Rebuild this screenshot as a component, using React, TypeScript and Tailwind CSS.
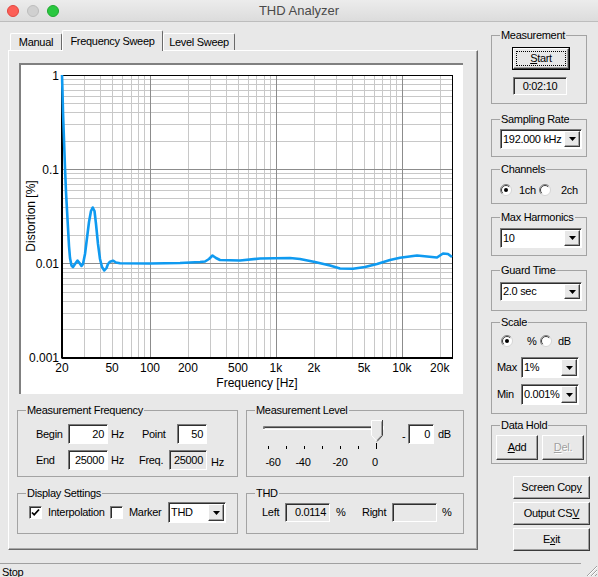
import type { ReactNode } from "react"
import clsx from "clsx"

// classic win32 bevels
const raised =
  "border border-t-white border-l-white border-r-[#3a3a3a] border-b-[#3a3a3a] shadow-[inset_-1px_-1px_0_#a0a0a0]"
const sunken =
  "border border-t-[#7c7c7c] border-l-[#7c7c7c] border-r-white border-b-white shadow-[inset_1px_1px_0_#2e2e2e]"

// chart plot area (svg coords, svg origin = window 21,65)
const X0 = 41
const X1 = 431
const Y0 = 10
const Y1 = 292.5

const fx = (f: number) => X0 + (Math.log10(f / 20) / Math.log10(1250)) * (X1 - X0)
const vy = (v: number) => Y0 + -Math.log10(v) * ((Y1 - Y0) / 3)

// THD curve, traced in window pixels
const CURVE = [
  [62, 75], [62.5, 92], [63, 112], [64, 140], [65, 168], [66, 192], [67, 210],
  [68, 228], [69, 246], [70, 258], [71.5, 265.5], [73, 267], [75, 264],
  [77.5, 260.5], [79.5, 263], [81.5, 266], [83, 264], [85, 254], [87, 238],
  [89, 222], [91, 211], [92.7, 207.5], [94.5, 211], [96, 224], [98, 244],
  [100, 259], [102, 267], [104.3, 270.5], [106.5, 268], [108, 264],
  [110, 261.7], [113, 260.7], [116, 262.5], [120, 263.3], [150, 263.5],
  [180, 263], [200, 262], [205, 261.5], [209, 259], [212.5, 255.5], [216, 258],
  [220, 260], [240, 260.5], [260, 258.5], [290, 258], [300, 259], [315, 262],
  [330, 265.5], [340, 268.5], [353, 268.7], [365, 267], [377, 264],
  [390, 260], [400, 257.7], [417, 255.5], [437, 257.5], [443, 253.5],
  [448, 254], [452, 257],
]

export default function App() {
  return (
    <div className="w-[598px] h-[577px] overflow-hidden flex flex-col bg-[#e8e8e8] text-[11px] tracking-[-0.3px] text-black font-['Liberation_Sans',Arial,sans-serif] select-none">
      <TitleBar />
      <div className="flex h-[541px] shrink-0">
        <div className="w-[478px] pl-[8px] pt-[8px]">
          <div className="flex items-end h-[20px] pl-[2px]">
            <Tab label="Manual" className="w-[52px]" />
            <Tab label="Frequency Sweep" active className="w-[101px]" />
            <Tab label="Level Sweep" className="w-[72px]" />
          </div>
          <div className="w-[470px] h-[500px] border border-t-white border-l-white border-r-[#6a6a6a] border-b-[#6a6a6a] shadow-[inset_-1px_-1px_0_#a8a8a8] pt-[12px]">
            <div className="ml-[10px] w-[444px] h-[331px] bg-white border-l-2 border-t-2 border-l-[#808080] border-t-[#808080]">
              <Chart />
            </div>
            <div className="flex gap-[8px] pl-[8px] mt-[9px]">
              <MeasurementFrequency />
              <MeasurementLevel />
            </div>
            <div className="flex gap-[8px] pl-[8px] mt-[9px]">
              <DisplaySettings />
              <ThdReadout />
            </div>
          </div>
        </div>
        <Sidebar />
      </div>
      <StatusBar />
    </div>
  )
}

function TitleBar() {
  return (
    <div className="h-[22px] shrink-0 grid grid-cols-[1fr_auto_1fr] items-center bg-linear-to-b from-[#ececec] to-[#dcdcdc] border-b border-b-[#bdbdbd] text-[13px] tracking-normal text-[#4a4a4a]">
      <div className="flex items-center gap-[8px] pl-[7px]">
        <span className="w-[12px] h-[12px] rounded-full bg-[#fc5f57] border border-[#e1463f]" />
        <span className="w-[12px] h-[12px] rounded-full bg-[#d0d0d0] border border-[#bdbdbd]" />
        <span className="w-[12px] h-[12px] rounded-full bg-[#2ac840] border border-[#1fa82f]" />
      </div>
      <div>THD Analyzer</div>
      <div />
    </div>
  )
}

function Tab({ label, active, className }: { label: string; active?: boolean; className?: string }) {
  return (
    <div
      className={clsx(
        "flex items-center justify-center bg-[#e8e8e8] rounded-t-[2px] border-t border-l border-r border-t-white border-l-white border-r-[#6a6a6a]",
        active ? "h-[21px] -mb-px relative z-10" : "h-[17px]",
        className,
      )}
    >
      {label}
    </div>
  )
}

function GroupBox({ title, className, children }: { title: string; className?: string; children?: ReactNode }) {
  return (
    <fieldset className={clsx("border border-[#a3a3a3] min-w-0 shrink-0", className)}>
      <legend className="ml-[8px] px-px leading-[14px]">{title}</legend>
      {children}
    </fieldset>
  )
}

function Field({ children, className, center }: { children?: ReactNode; className?: string; center?: boolean }) {
  return (
    <div
      className={clsx(
        "flex items-center leading-none shrink-0",
        center ? "justify-center" : "justify-end pr-[3px]",
        sunken,
        className,
      )}
    >
      {children}
    </div>
  )
}

function Combo({ value, className }: { value: string; className?: string }) {
  return (
    <div className={clsx("flex bg-white shrink-0", sunken, className)}>
      <span className="flex-1 pl-[2px] overflow-hidden whitespace-nowrap leading-none self-center">{value}</span>
      <span className={clsx("w-[16px] flex items-center justify-center bg-[#e8e8e8] m-px", raised)}>
        <svg width="7" height="4" viewBox="0 0 7 4">
          <path d="M0 0h7L3.5 4z" fill="#000" />
        </svg>
      </span>
    </div>
  )
}

function Radio({ checked }: { checked?: boolean }) {
  return (
    <svg width="12" height="12" viewBox="0 0 12 12" className="shrink-0">
      <circle cx="6" cy="6" r="5.5" fill="#fff" />
      <path d="M2.1 9.9A5.5 5.5 0 0 1 9.9 2.1" stroke="#808080" fill="none" />
      <path d="M2.8 9.2A4.5 4.5 0 0 1 9.2 2.8" stroke="#404040" fill="none" />
      <path d="M9.9 2.1A5.5 5.5 0 0 1 2.1 9.9" stroke="#d4d4d4" fill="none" />
      {checked && <circle cx="6" cy="6" r="2" fill="#000" />}
    </svg>
  )
}

function Check({ checked }: { checked?: boolean }) {
  return (
    <span className={clsx("w-[13px] h-[13px] bg-white flex items-center justify-center shrink-0", sunken)}>
      {checked && (
        <svg width="9" height="9" viewBox="0 0 9 9">
          <path d="M1 4.5l2.2 2.3L8 1.5" stroke="#000" strokeWidth="1.8" fill="none" />
        </svg>
      )}
    </span>
  )
}

function Button({ children, className, disabled }: { children: ReactNode; className?: string; disabled?: boolean }) {
  return (
    <div
      className={clsx(
        "flex items-center justify-center shrink-0",
        raised,
        disabled && "text-[#a0a0a0] [text-shadow:1px_1px_0_#fff]",
        className,
      )}
    >
      {children}
    </div>
  )
}

function Chart() {
  const vlines: { x: number; major: boolean }[] = []
  for (const d of [10, 100, 1000, 10000]) {
    for (let m = 1; m <= 9; m++) {
      const f = m * d
      if (f <= 20 || f >= 25000) continue
      vlines.push({ x: Math.round(fx(f)) + 0.5, major: m === 1 })
    }
  }
  const hlines: { y: number; major: boolean }[] = []
  for (const d of [0.1, 0.01, 0.001]) {
    for (let m = 1; m <= 9; m++) {
      const v = m * d
      if (v >= 0.999 || v <= 0.0011) continue
      hlines.push({ y: Math.round(vy(v)) + 0.5, major: m === 1 })
    }
  }
  const xLabels: [number, string][] = [
    [20, "20"], [50, "50"], [100, "100"], [200, "200"], [500, "500"],
    [1000, "1k"], [2000, "2k"], [5000, "5k"], [10000, "10k"], [20000, "20k"],
  ]
  const yLabels: [number, string][] = [[1, "1"], [0.1, "0.1"], [0.01, "0.01"], [0.001, "0.001"]]

  return (
    <svg width="442" height="329" className="block text-[12px] tracking-normal" fill="#000">
      {vlines.filter((l) => !l.major).map((l) => (
        <line key={"v" + l.x} x1={l.x} x2={l.x} y1={Y0} y2={Y1} stroke="#c8c8c8" />
      ))}
      {hlines.filter((l) => !l.major).map((l) => (
        <line key={"h" + l.y} x1={X0} x2={X1} y1={l.y} y2={l.y} stroke="#c8c8c8" />
      ))}
      {vlines.filter((l) => l.major).map((l) => (
        <line key={"V" + l.x} x1={l.x} x2={l.x} y1={Y0} y2={Y1} stroke="#8c8c8c" />
      ))}
      {hlines.filter((l) => l.major).map((l) => (
        <line key={"H" + l.y} x1={X0} x2={X1} y1={l.y} y2={l.y} stroke="#8c8c8c" />
      ))}
      <rect x={X0 + 0.5} y={Y0 + 0.5} width={X1 - X0} height={Y1 - Y0} fill="none" stroke="#000" />
      <line x1={X0} x2={X0} y1={Y0} y2={Y1 + 1} stroke="#000" strokeWidth="2" />
      <line x1={X0} x2={X1 + 1} y1={Y1 + 0.5} y2={Y1 + 0.5} stroke="#000" strokeWidth="2" />

      <polyline
        points={CURVE.map(([x, y]) => `${x - 21},${y - 65}`).join(" ")}
        fill="none"
        stroke="#0f9af0"
        strokeWidth="2.6"
        strokeLinejoin="round"
      />

      {yLabels.map(([v, t]) => (
        <text key={t} x={38} y={vy(v) + 4.5} textAnchor="end">
          {t}
        </text>
      ))}
      {xLabels.map(([f, t]) => (
        <text key={t} x={fx(f)} y={307} textAnchor="middle">
          {t}
        </text>
      ))}
      <text x={236} y={322} textAnchor="middle">
        Frequency [Hz]
      </text>
      <text transform="translate(14 151) rotate(-90)" textAnchor="middle">
        Distortion [%]
      </text>
    </svg>
  )
}

function MeasurementFrequency() {
  return (
    <GroupBox title="Measurement Frequency" className="w-[221px] h-[74px]">
      <div className="pl-[18px] pt-[7px] flex flex-col gap-[6px]">
        <div className="flex items-center h-[20px]">
          <span className="w-[32px]">Begin</span>
          <Field className="w-[40px] h-[20px] bg-white">20</Field>
          <span className="ml-[3px] w-[31px]">Hz</span>
          <span className="w-[35px]">Point</span>
          <Field className="w-[30px] h-[20px] bg-white">50</Field>
        </div>
        <div className="flex items-center h-[20px]">
          <span className="w-[32px]">End</span>
          <Field className="w-[40px] h-[20px] bg-white">25000</Field>
          <span className="ml-[3px] w-[28px]">Hz</span>
          <span className="w-[30px]">Freq.</span>
          <Field className="w-[38px] h-[20px] bg-[#e8e8e8]">25000</Field>
          <span className="ml-[4px] mt-[5px]">Hz</span>
        </div>
      </div>
    </GroupBox>
  )
}

function LevelSlider() {
  const ticks = [0, 1, 2, 3, 4, 5, 6]
  return (
    <svg width="124" height="52" className="shrink-0 block" fill="#000">
      <path d="M1.5 12.5V9.5H120.5" stroke="#808080" fill="none" />
      <path d="M2.5 11.5V10.5H119.5" stroke="#404040" fill="none" />
      <path d="M1 12.5H121.5V9" stroke="#fff" fill="none" />
      <path d="M109.5 3.5H120.5V18.5L115 24.5L109.5 18.5Z" fill="#e8e8e8" />
      <path d="M109.5 18.5V3.5H120.5" stroke="#fff" fill="none" />
      <path d="M109.5 18.5L115 24.5" stroke="#fff" fill="none" />
      <path d="M119.5 4.5V18.2L115 23.2" stroke="#a0a0a0" fill="none" />
      <path d="M120.5 3V18.5L115 24.5" stroke="#404040" fill="none" />
      {ticks.map((i) => (
        <line
          key={i}
          x1={6.5 + 18 * i}
          x2={6.5 + 18 * i}
          y1={i === 6 ? 26 : 29}
          y2={32}
          stroke="#000"
        />
      ))}
      <text x={11} y={49} textAnchor="middle">-60</text>
      <text x={41} y={49} textAnchor="middle">-40</text>
      <text x={78} y={49} textAnchor="middle">-20</text>
      <text x={113} y={49} textAnchor="middle">0</text>
    </svg>
  )
}

function MeasurementLevel() {
  return (
    <GroupBox title="Measurement Level" className="w-[218px] h-[74px]">
      <div className="flex pl-[15px]">
        <LevelSlider />
        <div className="flex items-center h-[20px] mt-[7px] ml-[16px]">
          <span className="w-[6px] mt-[4px]">-</span>
          <Field className="w-[26px] h-[20px] bg-white">0</Field>
          <span className="ml-[4px]">dB</span>
        </div>
      </div>
    </GroupBox>
  )
}

function DisplaySettings() {
  return (
    <GroupBox title="Display Settings" className="w-[221px] h-[48px]">
      <div className="flex items-center pl-[11px] mt-[2px] h-[21px]">
        <Check checked />
        <span className="ml-[6px] w-[62px]">Interpolation</span>
        <Check />
        <span className="ml-[6px] w-[39px]">Marker</span>
        <Combo value="THD" className="w-[58px] h-[21px]" />
      </div>
    </GroupBox>
  )
}

function ThdReadout() {
  return (
    <GroupBox title="THD" className="w-[218px] h-[48px]">
      <div className="flex items-center pl-[15px] mt-[3px] h-[19px]">
        <span className="w-[23px]">Left</span>
        <Field className="w-[45px] h-[19px] bg-[#e8e8e8]">0.0114</Field>
        <span className="ml-[6px] w-[26px]">%</span>
        <span className="w-[30px]">Right</span>
        <Field className="w-[45px] h-[19px] bg-[#e8e8e8]" />
        <span className="ml-[5px]">%</span>
      </div>
    </GroupBox>
  )
}

function Sidebar() {
  return (
    <div className="ml-[13px] w-[98px] pt-[6px] flex flex-col">
      <GroupBox title="Measurement" className="w-[96px] h-[76px]">
        <div className="flex flex-col pt-[5px]">
          <div className="ml-[20px] w-[58px] h-[23px] border border-black flex">
            <div className={clsx("flex-1 flex p-[2px]", raised)}>
              <span className="flex-1 flex items-center justify-center border border-dotted border-black">
                <span>
                  <u>S</u>tart
                </span>
              </span>
            </div>
          </div>
          <Field center className="ml-[21px] mt-[7px] w-[54px] h-[18px] bg-[#e8e8e8]">
            0:02:10
          </Field>
        </div>
      </GroupBox>

      <GroupBox title="Sampling Rate" className="mt-[8px] w-[96px] h-[45px]">
        <Combo value="192.000 kHz" className="ml-[8px] mt-[3px] w-[82px] h-[20px]" />
      </GroupBox>

      <GroupBox title="Channels" className="mt-[5px] w-[96px] h-[42px]">
        <div className="flex items-center mt-[8px] ml-[8px] h-[12px]">
          <Radio checked />
          <span className="ml-[7px] w-[20px]">1ch</span>
          <Radio />
          <span className="ml-[10px]">2ch</span>
        </div>
      </GroupBox>

      <GroupBox title="Max Harmonics" className="mt-[6px] w-[96px] h-[46px]">
        <Combo value="10" className="ml-[8px] mt-[4px] w-[82px] h-[20px]" />
      </GroupBox>

      <GroupBox title="Guard Time" className="mt-[7px] w-[96px] h-[48px]">
        <Combo value="2.0 sec" className="ml-[8px] mt-[5px] w-[82px] h-[19px]" />
      </GroupBox>

      <GroupBox title="Scale" className="mt-[4px] w-[96px] h-[99px]">
        <div className="flex items-center mt-[6px] ml-[9px] h-[12px]">
          <Radio checked />
          <span className="ml-[14px] w-[13px]">%</span>
          <Radio />
          <span className="ml-[6px]">dB</span>
        </div>
        <div className="flex items-center mt-[10px] ml-[5px] h-[21px]">
          <span className="w-[24px]">Max</span>
          <Combo value="1%" className="w-[58px] h-[21px]" />
        </div>
        <div className="flex items-center mt-[6px] ml-[5px] h-[21px]">
          <span className="w-[24px]">Min</span>
          <Combo value="0.001%" className="w-[58px] h-[21px]" />
        </div>
      </GroupBox>

      <GroupBox title="Data Hold" className="mt-[4px] w-[96px] h-[46px]">
        <div className="flex mt-[3px] ml-[4px] gap-[4px]">
          <Button className="w-[42px] h-[25px]">
            <span>
              <u>A</u>dd
            </span>
          </Button>
          <Button disabled className="w-[42px] h-[25px]">
            <span>
              <u>D</u>el.
            </span>
          </Button>
        </div>
      </GroupBox>

      <Button className="mt-[12px] ml-[22px] w-[77px] h-[23px]">
        <span>
          Screen Cop<u>y</u>
        </span>
      </Button>
      <Button className="mt-[3px] ml-[22px] w-[77px] h-[23px]">
        <span>
          Output CS<u>V</u>
        </span>
      </Button>
      <Button className="mt-[3px] ml-[22px] w-[77px] h-[23px]">
        <span>
          E<u>x</u>it
        </span>
      </Button>
    </div>
  )
}

function StatusBar() {
  return (
    <div className="h-[14px] shrink-0 flex">
      <div className="w-[581px] border-t border-t-[#a0a0a0] pl-[2px] leading-[16px]">Stop</div>
      <svg width="17" height="14" viewBox="0 0 17 14" className="block">
        <path d="M16 3L6 13M16 7L10 13M16 11L14 13" stroke="#a0a0a0" />
        <path d="M16 4L7 13M16 8L11 13" stroke="#fff" />
      </svg>
    </div>
  )
}
